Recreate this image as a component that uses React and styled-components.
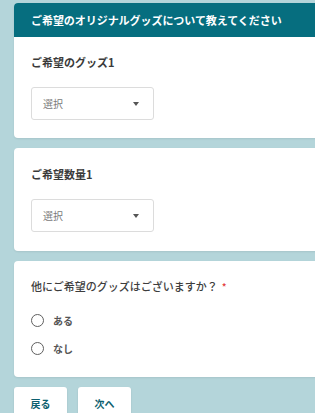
import React from "react";
import styled, { createGlobalStyle } from "styled-components";

const Global = createGlobalStyle`
  html, body { margin: 0; padding: 0; background: #b4d5da; overflow: hidden; }
  body { font-family: "Noto Sans CJK JP", "Noto Sans", sans-serif; }
`;

const Page = styled.div`
  display: flex;
  flex-direction: column;
  gap: 10px;
  padding: 3px 0 0 14px;
  width: 330px;
`;

const Card = styled.section`
  background: #fff;
  border-radius: 4px;
  overflow: hidden;
  box-shadow: 0 1px 2px rgba(0, 0, 0, 0.08);
`;

const Header = styled.div`
  background: #066e7f;
  color: #fff;
  height: 34px;
  display: flex;
  align-items: center;
  padding-left: 17px;
  font-size: 11px;
  font-weight: 700;
  letter-spacing: -0.05px;
  white-space: nowrap;
`;

const Body = styled.div`
  display: flex;
  flex-direction: column;
  padding: ${(p) => p.$pt || 18}px 17px ${(p) => p.$pb || 18}px;
`;

const Label = styled.div`
  font-size: 11px;
  line-height: 14px;
  font-weight: 700;
  color: #3a3a3a;
  white-space: nowrap;
`;

const Question = styled(Label)`
  font-weight: 500;
  color: #3d3d3d;
`;

const Required = styled.span`
  color: #e23a3a;
  margin-left: 4px;
  font-size: 10px;
`;

const Select = styled.div`
  margin-top: 18px;
  width: 123px;
  height: 33px;
  box-sizing: border-box;
  border: 1px solid #dcdcdc;
  border-radius: 3px;
  display: flex;
  align-items: center;
  justify-content: space-between;
  padding: 0 14px 0 11px;
  font-size: 10px;
  color: #7a7a7a;
`;

const Caret = styled.span`
  width: 0;
  height: 0;
  border-left: 3.5px solid transparent;
  border-right: 3.5px solid transparent;
  border-top: 4px solid #555;
`;

const Options = styled.div`
  display: flex;
  flex-direction: column;
  gap: 8px;
  margin-top: 16px;
`;

const Option = styled.label`
  display: flex;
  align-items: center;
  height: 20px;
  gap: 9px;
  font-size: 10px;
  font-weight: 700;
  color: #555;
`;

const Radio = styled.span`
  width: 13px;
  height: 13px;
  box-sizing: border-box;
  border: 1.6px solid #5f5f5f;
  border-radius: 50%;
`;

const Buttons = styled.div`
  display: flex;
  gap: 11px;
`;

const Button = styled.button`
  width: 53px;
  height: 32px;
  background: #fff;
  border: none;
  border-radius: 3px;
  box-shadow: 0 1px 2px rgba(0, 0, 0, 0.12);
  font-family: inherit;
  font-size: 10px;
  font-weight: 700;
  color: #0d5f6f;
  display: flex;
  align-items: center;
  justify-content: center;
  padding: 0;
`;

export default function App() {
  return (
    <>
      <Global />
      <Page>
        <Card>
          <Header>ご希望のオリジナルグッズについて教えてください</Header>
          <Body>
            <Label>ご希望のグッズ1</Label>
            <Select>
              <span>選択</span>
              <Caret />
            </Select>
          </Body>
        </Card>
        <Card>
          <Body $pt={19} $pb={19}>
            <Label>ご希望数量1</Label>
            <Select>
              <span>選択</span>
              <Caret />
            </Select>
          </Body>
        </Card>
        <Card>
          <Body $pb={19}>
            <Question>
              他にご希望のグッズはございますか？<Required>*</Required>
            </Question>
            <Options>
              <Option>
                <Radio />
                ある
              </Option>
              <Option>
                <Radio />
                なし
              </Option>
            </Options>
          </Body>
        </Card>
        <Buttons>
          <Button>戻る</Button>
          <Button>次へ</Button>
        </Buttons>
      </Page>
    </>
  );
}
